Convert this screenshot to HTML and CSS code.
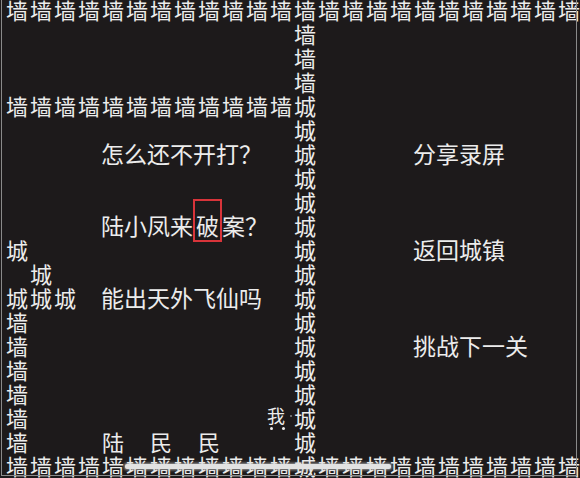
FILE: index.html
```html
<!DOCTYPE html>
<html lang="zh-CN">
<head>
<meta charset="utf-8">
<title>墙</title>
<link rel="stylesheet" href="styles.css">
</head>
<body>
<div class="screen">
  <div class="board">
    <div class="row"><span class="c">墙</span><span class="c">墙</span><span class="c">墙</span><span class="c">墙</span><span class="c">墙</span><span class="c">墙</span><span class="c">墙</span><span class="c">墙</span><span class="c">墙</span><span class="c">墙</span><span class="c">墙</span><span class="c">墙</span><span class="c">墙</span><span class="c">墙</span><span class="c">墙</span><span class="c">墙</span><span class="c">墙</span><span class="c">墙</span><span class="c">墙</span><span class="c">墙</span><span class="c">墙</span><span class="c">墙</span><span class="c">墙</span><span class="c">墙</span></div>
    <div class="row"><span class="c col-13">墙</span></div>
    <div class="row"><span class="c col-13">墙</span></div>
    <div class="row"><span class="c col-13">墙</span></div>
    <div class="row"><span class="c">墙</span><span class="c">墙</span><span class="c">墙</span><span class="c">墙</span><span class="c">墙</span><span class="c">墙</span><span class="c">墙</span><span class="c">墙</span><span class="c">墙</span><span class="c">墙</span><span class="c">墙</span><span class="c">墙</span><span class="c">城</span></div>
    <div class="row"><span class="c col-13">城</span></div>
    <div class="row"><span class="line col-5">怎么还不开打？</span><span class="c col-13">城</span><span class="line col-18">分享录屏</span></div>
    <div class="row"><span class="c col-13">城</span></div>
    <div class="row"><span class="c col-13">城</span></div>
    <div class="row"><span class="line col-5">陆小凤来<span class="marked">破</span>案？</span><span class="c col-13">城</span></div>
    <div class="row"><span class="c">城</span><span class="c col-13">城</span><span class="line col-18">返回城镇</span></div>
    <div class="row"><span class="c col-2">城</span><span class="c col-13">城</span></div>
    <div class="row"><span class="c">城</span><span class="c">城</span><span class="c">城</span><span class="line col-5">能出天外飞仙吗</span><span class="c col-13">城</span></div>
    <div class="row"><span class="c">墙</span><span class="c col-13">城</span></div>
    <div class="row"><span class="c">墙</span><span class="c col-13">城</span><span class="line col-18">挑战下一关</span></div>
    <div class="row"><span class="c">墙</span><span class="c col-13">城</span></div>
    <div class="row"><span class="c">墙</span><span class="c col-13">城</span></div>
    <div class="row"><span class="c">墙</span><span class="c me col-12">我</span><span class="c col-13">城</span></div>
    <div class="row"><span class="c">墙</span><span class="c col-5">陆</span><span class="c col-7">民</span><span class="c col-9">民</span><span class="c col-13">城</span></div>
    <div class="row last"><span class="c">墙</span><span class="c">墙</span><span class="c">墙</span><span class="c">墙</span><span class="c">墙</span><span class="c">墙</span><span class="c">墙</span><span class="c">墙</span><span class="c">墙</span><span class="c">墙</span><span class="c">墙</span><span class="c">墙</span><span class="c">城</span><span class="c">墙</span><span class="c">墙</span><span class="c">墙</span><span class="c">墙</span><span class="c">墙</span><span class="c">墙</span><span class="c">墙</span><span class="c">墙</span><span class="c">墙</span><span class="c">墙</span><span class="c">墙</span><span class="strike"></span></div>
  </div>
  <div class="frame"></div>
</div>
</body>
</html>
```

FILE: styles.css
```css
html, body {
  margin: 0;
  padding: 0;
  background: #1d1a1b;
}

.screen {
  position: relative;
  width: 580px;
  height: 478px;
  overflow: hidden;
  background: #1d1a1b;
  color: #ececec;
  font-family: "Noto Sans CJK SC", "Noto Sans", sans-serif;
}

.board {
  margin: -3px 0 0 5px;
  display: flex;
  flex-direction: column;
}

.row {
  position: relative;
  display: grid;
  grid-template-columns: repeat(24, 24px);
  height: 24px;
}

.c {
  font-size: 22px;
  line-height: 24px;
  text-align: center;
  white-space: nowrap;
}

.line {
  font-size: 23px;
  line-height: 24px;
  white-space: nowrap;
}

.col-2 { grid-column-start: 2; }
.col-5 { grid-column-start: 5; }
.col-7 { grid-column-start: 7; }
.col-9 { grid-column-start: 9; }
.col-12 { grid-column-start: 12; }
.col-13 { grid-column-start: 13; }
.col-18 { grid-column-start: 18; }

.marked {
  position: relative;
  display: inline-block;
  margin: 0 3px;
}

.marked::before {
  content: "";
  position: absolute;
  left: -3px;
  right: -3px;
  top: -14px;
  bottom: -5px;
  border: 2px solid #d8343a;
}

.me {
  position: relative;
  font-size: 18px;
  line-height: 20px;
  text-align: left;
  margin-left: -2px;
}

.me::before {
  content: "";
  position: absolute;
  left: 3px;
  top: 22px;
  width: 3px;
  height: 3px;
  border-radius: 50%;
  background: #ececec;
  box-shadow: 12px 0 0 #ececec;
}

.me::after {
  content: "";
  position: absolute;
  left: 23px;
  top: 10px;
  width: 2px;
  height: 2px;
  background: #6a6a6a;
}

.strike {
  position: absolute;
  left: 120px;
  width: 266px;
  top: 11px;
  height: 5px;
  border-radius: 2px;
  background: #e2e2e2;
  box-shadow: 0 0 3px 1px rgba(210, 210, 210, 0.7);
}

.frame {
  position: absolute;
  left: 1px;
  top: 0;
  width: 574px;
  height: 475px;
  border-left: 1px solid #8a8a8a;
  border-right: 1px solid #8a8a8a;
  border-bottom: 1px solid #8a8a8a;
  pointer-events: none;
}
```
